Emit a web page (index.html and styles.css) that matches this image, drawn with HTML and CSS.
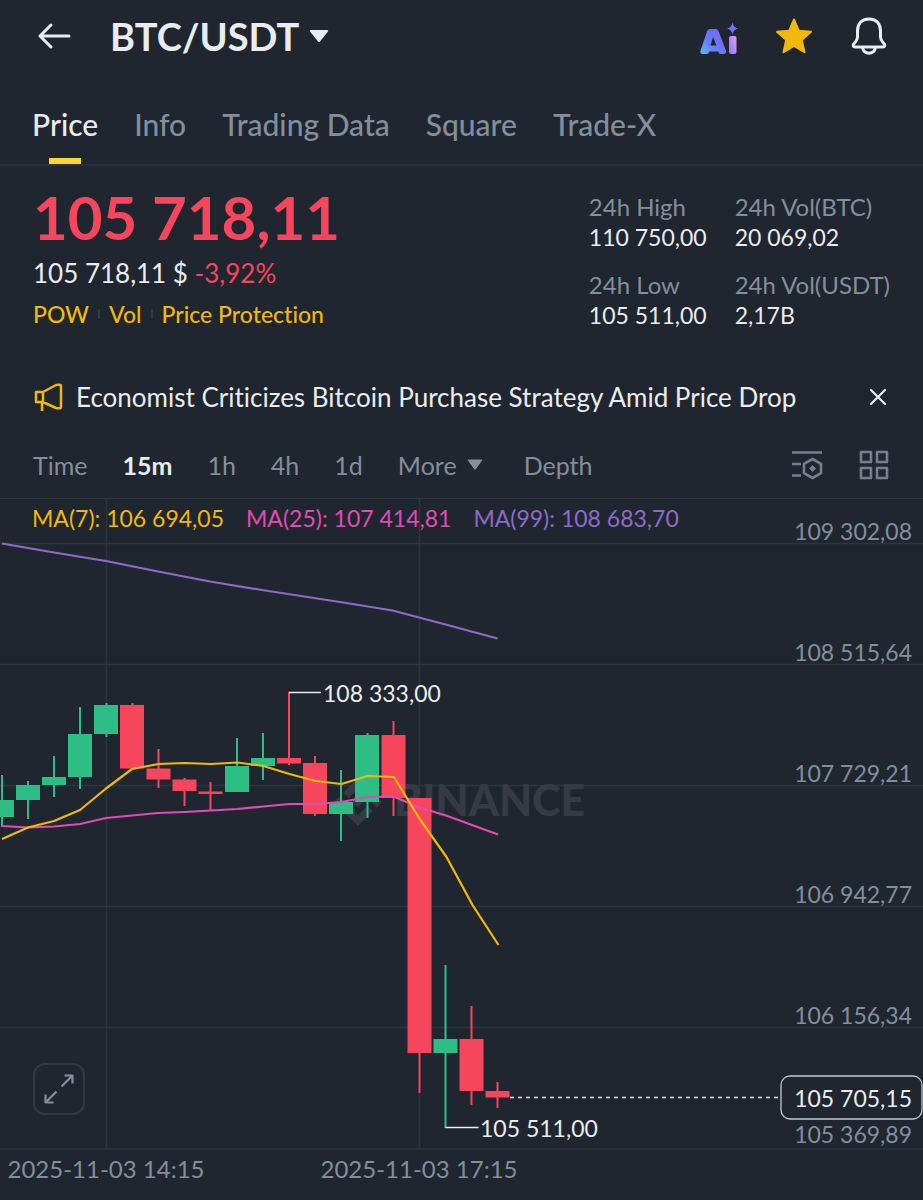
FILE: index.html
```html
<!DOCTYPE html>
<html lang="en">
<head>
<meta charset="utf-8">
<meta name="viewport" content="width=device-width, initial-scale=1">
<title>BTC/USDT</title>
<link rel="stylesheet" href="styles.css">
</head>
<body>
<header class="topbar">
  <button class="icon-btn back" aria-label="Back">
    <svg width="34" height="28" viewBox="0 0 34 28" fill="none" stroke="#eaecef" stroke-width="3" stroke-linecap="round" stroke-linejoin="round"><path d="M32 14H3M14 3 3 14l11 11"/></svg>
  </button>
  <button class="pair">
    <h1 class="pair-name">BTC/USDT</h1>
    <svg width="20" height="14" viewBox="0 0 20 14"><path d="M2 1h16q2 0 .8 1.7L11 12.4q-1 1.200-2 0L1.200 2.700Q0 1 2 1z" fill="#eaecef"/></svg>
  </button>
  <div class="actions">
    <button class="icon-btn" aria-label="AI">
      <svg width="40" height="38" viewBox="0 0 40 38">
        <defs>
          <linearGradient id="ga" x1="0" y1="1" x2="1" y2="0"><stop offset="0" stop-color="#5cb8fa"/><stop offset=".4" stop-color="#6b7cf5"/><stop offset="1" stop-color="#7a62f0"/></linearGradient>
          <linearGradient id="gi" x1="0" y1="1" x2="1" y2="0"><stop offset="0" stop-color="#8a7cf8"/><stop offset="1" stop-color="#e79bee"/></linearGradient>
        </defs>
        <path fill="url(#ga)" fill-rule="evenodd" d="M12 12h5.500q2.200 0 3 2l7.200 19q1.300 4-2.200 4H23q-2 0-3-2.600h-8.500q-.8 2.600-3 2.600H4.700q-3.400 0-2-4l6.500-19q.8-2 2.800-2zM15 20l-2.500 8.500h6z"/>
        <rect x="31" y="19" width="7.500" height="18" rx="2" fill="url(#gi)"/>
        <path d="M34.500 5.500q1 5 5.500 6-4.500 1-5.500 6-1-5-5.500-6 4.500-1 5.500-6z" fill="#7470f3"/>
      </svg>
    </button>
    <button class="icon-btn" aria-label="Favorite">
      <svg width="38" height="38" viewBox="0 0 38 38"><path d="M19 2.500l4.800 11.200 12.200 1.100-9.200 8.200 2.700 12.200L19 28.800 8.500 35.200l2.700-12.200L2 14.800l12.200-1.100z" fill="#f0b90b" stroke="#f0b90b" stroke-width="2" stroke-linejoin="round"/></svg>
    </button>
    <button class="icon-btn" aria-label="Alerts">
      <svg width="38" height="40" viewBox="0 0 38 40" fill="none" stroke="#eaecef" stroke-width="3" stroke-linejoin="round"><path d="M19 3C11 3 7.500 8 7.500 15v6q0 3-2.500 5.500l-1.500 1.700q-1 2.800 1.500 2.800h28q2.500 0 1.500-2.800L33 26.500q-2.500-2.500-2.500-5.500v-6C30.500 8 27 3 19 3zM12.500 31.500c1 7.500 12 7.500 13 0"/></svg>
    </button>
  </div>
</header>

<nav class="tabs">
  <a class="tab active" href="#price" aria-current="page">Price</a>
  <a class="tab" href="#info">Info</a>
  <a class="tab" href="#data">Trading Data</a>
  <a class="tab" href="#square">Square</a>
  <a class="tab" href="#tradex">Trade-X</a>
</nav>

<main>
  <section class="summary">
    <div class="quote">
      <p class="last">105 718,11</p>
      <p class="fiat">105 718,11 $ <span class="down">-3,92%</span></p>
      <p class="tags"><a href="#pow">POW</a><a href="#vol">Vol</a><a href="#protection">Price Protection</a></p>
    </div>
    <dl class="stats">
      <div><dt>24h High</dt><dd>110 750,00</dd></div>
      <div><dt>24h Vol(BTC)</dt><dd>20 069,02</dd></div>
      <div><dt>24h Low</dt><dd>105 511,00</dd></div>
      <div><dt>24h Vol(USDT)</dt><dd>2,17B</dd></div>
    </dl>
  </section>

  <section class="news">
    <svg width="30" height="30" viewBox="0 0 30 30" fill="none" stroke="#f0b90b" stroke-width="2.500" stroke-linejoin="round"><path d="M2 10h7L22 3q5-1 5 1v21q0 2-5 1L9 20H2zM9 10v10M8 20v9"/></svg>
    <a class="headline" href="#news">Economist Criticizes Bitcoin Purchase Strategy Amid Price Drop</a>
    <button class="icon-btn" aria-label="Dismiss">
      <svg width="18" height="18" viewBox="0 0 18 18" stroke="#eaecef" stroke-width="2.200" stroke-linecap="round"><path d="M2 2l14 14M16 2 2 16"/></svg>
    </button>
  </section>

  <section class="intervals">
    <button class="interval">Time</button>
    <button class="interval active">15m</button>
    <button class="interval">1h</button>
    <button class="interval">4h</button>
    <button class="interval">1d</button>
    <button class="interval more">More <svg width="16" height="12" viewBox="0 0 16 12"><path d="M1 1h14L8 10.500z" fill="#848e9c" stroke="#848e9c" stroke-linejoin="round"/></svg></button>
    <button class="interval">Depth</button>
    <div class="tools">
      <button class="icon-btn" aria-label="Indicators">
        <svg width="32" height="30" viewBox="0 0 32 30" fill="none" stroke="#767f8e" stroke-width="2.600"><path d="M1 2.500h30M1 14h9M1 25.500h9M21.500 9l8.500 4.800v9.400L21.500 28 13 23.200v-9.400z" stroke-linejoin="round"/><path d="M21.500 15l3.500 3.500-3.500 3.500-3.500-3.500z" fill="#767f8e" stroke="none"/></svg>
      </button>
      <button class="icon-btn" aria-label="Layout">
        <svg width="30" height="30" viewBox="0 0 30 30" fill="none" stroke="#767f8e" stroke-width="2.600" stroke-linejoin="round"><path d="M2 2h10v10H2zM18 2h10v10H18zM2 18h10v10H2zM18 18h10v10H18z"/></svg>
      </button>
    </div>
  </section>

  <section class="chart">
    <svg class="plot" viewBox="0 498 923 702" role="img" aria-label="BTC/USDT 15 minute candlestick chart">
      <g class="grid">
        <path d="M0 542.500H923M0 663.500H923M0 784.500H923M0 905.500H923M0 1026.500H923M0 1148H923M106.500 497V1148M419.500 497V1148"/>
      </g>
      <g class="watermark">
        <path transform="translate(334 777) scale(2)" d="M16.624 13.920l2.718 2.716-7.353 7.353-7.353-7.352 2.717-2.717 4.636 4.660 4.635-4.660zm4.637-4.636L24 12l-2.715 2.716L18.568 12l2.693-2.716zm-9.272 0l2.716 2.692-2.717 2.717L9.272 12l2.717-2.715zm-9.273 0L5.409 12l-2.692 2.692L0 12l2.716-2.716zM11.989.012l7.353 7.329-2.718 2.715-4.635-4.636-4.636 4.660-2.717-2.716z"/>
        <text x="394" y="815">BINANCE</text>
      </g>
      <g class="up">
        <path class="wick" d="M2 774V826M28 780V818M54 755V796M80 706V788M106.500 702V736M237 737V791M263 732V779M341 769V840M367.500 732V817M445.500 964V1127"/>
        <path d="M0 799h14v17H0zM16 784h24v15H16zM42 776h24v8H42zM68 733h24v43H68zM94 704h24v29H94zM225 765h24v26h-24zM251 757h24v8h-24zM329 801h24v12h-24zM355 734h24v67h-24zM433.500 1038h24v14h-24z"/>
      </g>
      <g class="fall">
        <path class="wick" d="M132.500 702V768M158.500 748V787M184.500 777V805M210.500 781V809M289 691V764M315 755V815M393.500 720V815M419.500 797V1092M471.500 1005V1104M497.500 1081V1107"/>
        <path d="M120 704h24v63.500h-24zM146.500 767.500h24v11h-24zM172.500 778.500h24v11.500h-24zM198.500 790.500h24v2.500h-24zM277 757h24v5.500h-24zM303 762h24v51h-24zM381.500 734h24v63h-24zM407.500 797h24v255h-24zM459.500 1038h24v52h-24zM485.500 1090h24v6.500h-24z"/>
      </g>
      <path class="ma ma99" d="M2 542.500l52 9 52 8.500 52 10.500 52 10 52 8.500 26 4 52 8 52.500 8.500 53 14 52 14"/>
      <path class="ma ma25" d="M2 825l26 1.500 26-1 26-2.500 26-6 26-2.500 26-2.500 26.500-1 26.500-1.500 26.500-1.500 26-2.500 26-2.500h26l26-2 26-5 26-.5 26 11 26.500 8 26 9.500 26 9.500"/>
      <path class="ma ma7" d="M2 838l26-11.500 26-6.500 26-11 26-21.500 26-19.500 26.500-5 26-1 26.500 1 26.500-1.500 26 3.500 26 8 26 7 26 3 26-8 26.500 1 26 42.500 26.500 37.500 26 48 26 40"/>
      <path class="leader" d="M289 691.500h32M445.500 1126.500h33"/>
      <path class="leader last-line" d="M510 1096.500H781"/>
      <g class="callout">
        <text x="323" y="701">108 333,00</text>
        <text x="480" y="1136">105 511,00</text>
      </g>
      <g class="axis">
        <g text-anchor="end">
          <text x="912" y="539">109 302,08</text>
          <text x="912" y="660">108 515,64</text>
          <text x="912" y="781">107 729,21</text>
          <text x="912" y="902">106 942,77</text>
          <text x="912" y="1023">106 156,34</text>
          <text x="912" y="1142">105 369,89</text>
        </g>
        <g class="dates" text-anchor="middle">
          <text x="106" y="1177">2025-11-03 14:15</text>
          <text x="419" y="1177">2025-11-03 17:15</text>
        </g>
      </g>
      <rect class="price-box" x="781" y="1075" width="141" height="43" rx="9"/>
      <text class="price-now" x="912" y="1106" text-anchor="end">105 705,15</text>
    </svg>
    <p class="legend"><span class="l7">MA(7): 106 694,05</span><span class="l25">MA(25): 107 414,81</span><span class="l99">MA(99): 108 683,70</span></p>
    <button class="expand" aria-label="Full screen">
      <svg width="30" height="30" viewBox="0 0 30 30" fill="none" stroke="#848e9c" stroke-width="2.200"><path d="M17.500 12.500 28.500 1.500M20.500 1.500h8v8M12.500 17.500l-11 11M1.500 20.500v8h8" stroke-linejoin="round"/></svg>
    </button>
  </section>
</main>
</body>
</html>
```
FILE: styles.css
```css
* { box-sizing: border-box; }

body {
  margin: 0;
  background: #1f262f;
  color: #eaecef;
  font-family: Lato, "Open Sans", sans-serif;
  font-size: 24px;
  line-height: 30px;
  font-variant-ligatures: none;
}

h1, p, dl, dd { margin: 0; }
a { color: inherit; text-decoration: none; }
svg { display: block; flex: none; }

button {
  padding: 0;
  border: 0;
  background: none;
  color: inherit;
  font: inherit;
  cursor: pointer;
}

.topbar {
  display: flex;
  align-items: center;
  height: 72px;
  padding: 0 35px 0 37px;
}

.pair {
  display: flex;
  align-items: center;
  gap: 10px;
  margin-left: 39px;
}

.pair-name {
  font-size: 38px;
  line-height: 44px;
  font-weight: 700;
}

.actions {
  display: flex;
  align-items: center;
  gap: 37px;
  margin-left: auto;
}

.tabs {
  display: flex;
  gap: 36px;
  padding: 0 32px;
  border-bottom: 2px solid #2a313b;
  color: #848e9c;
  font-size: 30px;
  line-height: 36px;
  font-weight: 500;
}

.tab {
  display: flex;
  flex-direction: column;
  align-items: center;
  height: 92px;
  padding-top: 34px;
}

.tab.active { color: #eaecef; }

.tab.active::after {
  content: "";
  width: 32px;
  height: 6px;
  margin-top: auto;
  background: #fcd535;
}

.summary {
  display: flex;
  justify-content: space-between;
  padding: 21px 33px 0;
}

.last {
  color: #f6465d;
  font-size: 60px;
  line-height: 60px;
  font-weight: 700;
}

.fiat {
  margin-top: 11px;
  font-size: 26px;
}

.down { color: #f6465d; }

.tags {
  display: flex;
  margin-top: 11px;
  color: #f0b90b;
  font-size: 23px;
  font-weight: 500;
}

.tags a + a {
  display: flex;
  align-items: center;
}

.tags a + a::before {
  content: "";
  width: 2px;
  height: 10px;
  margin: 0 9px;
  background: #323943;
}

.stats {
  display: grid;
  grid-template-columns: auto auto;
  align-content: start;
  gap: 18px 28px;
  padding-top: 5px;
}

.stats dt { color: #848e9c; }
.stats dd { font-size: 23px; }

.news {
  display: flex;
  align-items: center;
  height: 70px;
  margin-top: 32px;
  padding: 0 36px 0 34px;
}

.headline {
  flex: 1;
  margin-left: 12px;
  font-size: 26px;
}

.intervals {
  display: flex;
  align-items: center;
  height: 66px;
  padding: 0 34px 0 33px;
  color: #848e9c;
  font-size: 25px;
  gap: 35px;
}

.interval.active {
  color: #eaecef;
  font-weight: 700;
}

.more {
  display: flex;
  align-items: center;
  gap: 10px;
  margin-right: 6px;
}

.tools {
  display: flex;
  gap: 36px;
  margin-left: auto;
}

.chart { position: relative; }

.plot {
  width: 100%;
  height: auto;
  border-top: 1px solid #2d343e;
  font-size: 23px;
}

.grid { stroke: #2d343e; stroke-width: 1.5; }
.watermark { fill: #353a44; font-size: 43px; font-weight: 900; }
.wick { fill: none; stroke-width: 2; }
.up { fill: #2ebd85; stroke: none; }
.up .wick { stroke: #2ebd85; }
.fall { fill: #f6465d; stroke: none; }
.fall .wick { stroke: #f6465d; }
.ma { fill: none; stroke-width: 2.2; stroke-linejoin: round; }
.ma7 { stroke: #f0b90b; }
.ma25 { stroke: #e24bb4; }
.ma99 { stroke: #8f6ac8; }
.leader { fill: none; stroke: #eaecef; stroke-width: 1.3; }
.last-line { stroke-dasharray: 4 4; }
.callout, .price-now { fill: #eaecef; }
.axis { fill: #848e9c; }
.dates { font-size: 24px; }
.price-box { fill: #1f262f; stroke: #c3c8d0; stroke-width: 1.3; }

.legend {
  position: absolute;
  top: 5px;
  left: 32px;
  display: flex;
  gap: 22px;
  font-size: 23px;
}

.l7 { color: #f0b90b; }
.l25 { color: #e24bb4; }
.l99 { color: #8f6ac8; }

.expand {
  position: absolute;
  left: 33px;
  bottom: 86px;
  display: grid;
  place-items: center;
  width: 52px;
  height: 52px;
  border: 2px solid #323943;
  border-radius: 12px;
}
```
